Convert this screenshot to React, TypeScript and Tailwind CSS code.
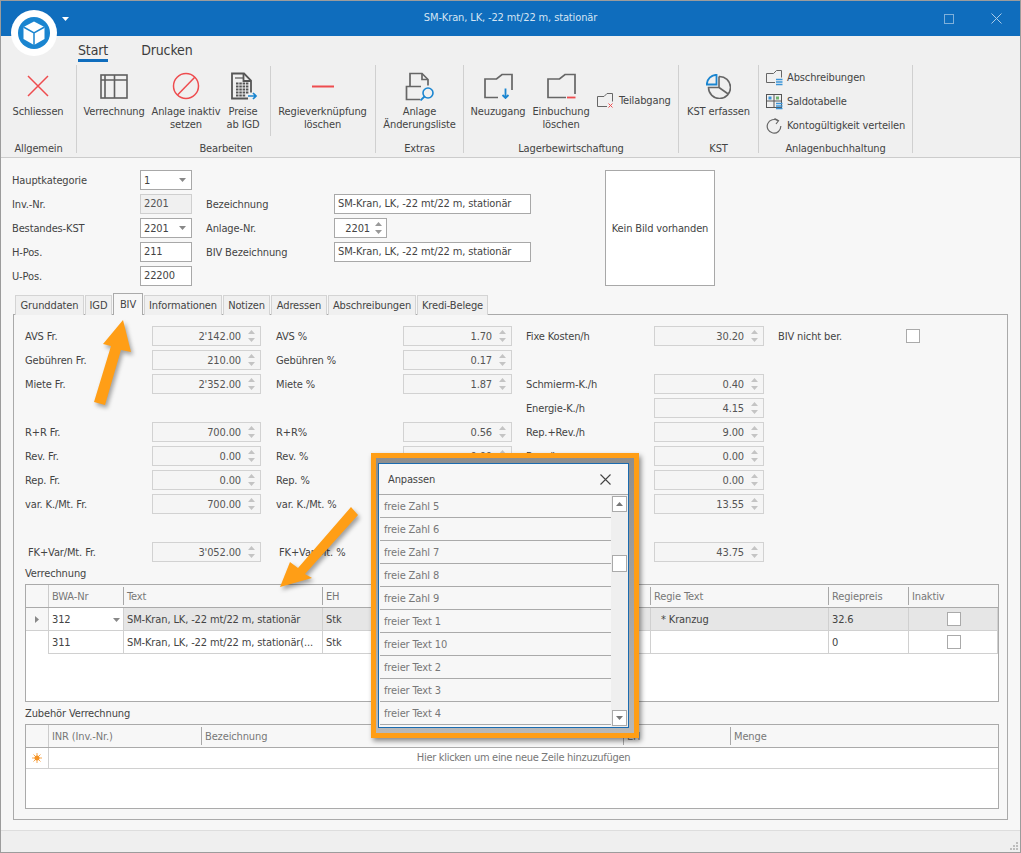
import React from 'react';

const gray = '#666666';

const Logo = () => (
  <svg width="46" height="46" viewBox="0 0 46 46">
    <circle cx="23" cy="23" r="23" fill="#fff" />
    <circle cx="23" cy="23" r="16" fill="#1a85d0" />
    <path d="M23 11.500l10.500 5.500v12L23 35l-10.500-6V17z" fill="#fff" />
    <path d="M12.500 17L23 23l10.500-6M23 23v12" fill="none" stroke="#1a85d0" strokeWidth="1.500" />
  </svg>
);

const CloseIcon = () => (
  <svg width="22" height="22" viewBox="0 0 22 22">
    <path d="M1 1l20 20M21 1L1 21" stroke="#ee4c4f" strokeWidth="1.500" fill="none" />
  </svg>
);

const TableIcon = () => (
  <svg width="28" height="25" viewBox="0 0 28 25" fill="none" stroke="#5f5f5f" strokeWidth="1.600">
    <rect x="1" y="1" width="26" height="23" />
    <path d="M1 6h26M5 1v23M14.500 1v23" />
  </svg>
);

const ForbiddenIcon = () => (
  <svg width="28" height="28" viewBox="0 0 28 28" fill="none" stroke="#ee4c4f" strokeWidth="1.500">
    <circle cx="14" cy="14" r="12.500" />
    <path d="M5.500 23L23 5" />
  </svg>
);

const PreiseIcon = () => (
  <svg width="30" height="28" viewBox="0 0 30 28" fill="none">
    <path d="M20 26.500H4V1.500h12l7 7v12" stroke="#555" strokeWidth="1.800" />
    <path d="M15.500 1.500v7.500H23" stroke="#555" strokeWidth="1.800" />
    <path d="M7 6h8" stroke="#555" strokeWidth="1.200" />
    <path d="M8 11.500h13M8 14.500h13M8 17.500h13M8 20.500h13M8 23.500h10" stroke="#555" strokeWidth="2" strokeDasharray="2.500 .8" />
    <path d="M20 24h8M25 21l3 3-3 3" stroke="#1a85d0" strokeWidth="1.700" />
  </svg>
);

const MinusIcon = () => (
  <svg width="22" height="3" viewBox="0 0 22 3">
    <rect width="22" height="2" y="0.500" fill="#ee4c4f" />
  </svg>
);

const ListeIcon = () => (
  <svg width="30" height="29" viewBox="0 0 30 29" fill="none">
    <path d="M5 14V1.500h12l6 6v6" stroke={gray} strokeWidth="1.700" />
    <path d="M17 1.500v6h6" stroke={gray} strokeWidth="1.700" />
    <path d="M15 27.500H1.500v-13H16" stroke={gray} strokeWidth="1.700" />
    <circle cx="23" cy="21" r="5" stroke="#1a85d0" strokeWidth="1.600" />
    <path d="M19.500 24.500l-4 4" stroke="#1a85d0" strokeWidth="1.800" />
  </svg>
);

const FolderIcon = ({ mark }: { mark: 'down' | 'minus' }) => (
  <svg width="29" height="26" viewBox="0 0 29 26" fill="none">
    {mark === 'down' ? (
      <>
        <path d="M14 24.500H1V6h11.500L18 1.500h10V17" stroke={gray} strokeWidth="1.700" />
        <path d="M21.500 15.500v9.500M18.500 22l3 3 3-3" stroke="#1a85d0" strokeWidth="1.800" />
      </>
    ) : (
      <>
        <path d="M19 24.500H1V6h11.500L18 1.500h10V21" stroke={gray} strokeWidth="1.700" />
        <path d="M20 24.500h8.500" stroke="#ee4c4f" strokeWidth="1.800" />
      </>
    )}
  </svg>
);

const SmallFolderIcon = () => (
  <svg width="17" height="16" viewBox="0 0 17 16" fill="none">
    <path d="M10 13.500H.5V3.500h6.500L10 .5h5.500v8" stroke={gray} />
    <path d="M11.500 10.500l4 4M15.500 10.500l-4 4" stroke="#ee4c4f" />
  </svg>
);

const PieIcon = () => (
  <svg width="25" height="25" viewBox="0 0 25 25" fill="none">
    <path d="M13 2.500A11 11 0 1 1 2.500 13.500H13V2.500M13 13.500l8.500 6" stroke={gray} strokeWidth="1.600" />
    <path d="M.8 10.500A10 10 0 0 1 10.500.8v9.700z" stroke="#1a85d0" strokeWidth="1.800" />
  </svg>
);

const AbschreibIcon = () => (
  <svg width="17" height="16" viewBox="0 0 17 16" fill="none">
    <path d="M9 12.500H.5V3.500h7L10.500.5h5v7" stroke={gray} />
    <path d="M10 9.500h6.500M10 12h6.500M10 14.500h6.500" stroke="#3a94d8" strokeWidth="1.300" />
  </svg>
);

const SaldoIcon = () => (
  <svg width="17" height="16" viewBox="0 0 17 16" fill="none">
    <rect x=".5" y=".5" width="15" height="13" stroke="#555" />
    <path d="M.5 7h15M8 .5v13" stroke="#555" />
    <rect x="2.500" y="2.500" width="3" height="3" fill="#3a94d8" />
    <rect x="10" y="2.500" width="3" height="3" fill="#6fb36f" />
    <path d="M10 9.500h6.500M10 12h6.500M10 14.500h6.500" stroke="#3a94d8" strokeWidth="1.300" />
  </svg>
);

const RefreshIcon = () => (
  <svg width="16" height="16" viewBox="0 0 16 16" fill="none">
    <path d="M12 2.800A6.800 6.800 0 1 0 14.800 8" stroke={gray} strokeWidth="1.200" />
    <path d="M8.500.5L12.500 2.800 10 6" stroke={gray} strokeWidth="1.200" />
  </svg>
);

const BigButton = ({ icon, lines, w }: { icon: React.ReactNode; lines: string[]; w: number }) => (
  <div className="flex flex-col items-center shrink-0" style={{ width: w }}>
    <div className="h-[40px] pt-[2px] flex items-center justify-center">{icon}</div>
    {lines.map((line) => (
      <div key={line} className="leading-[13px] whitespace-nowrap">{line}</div>
    ))}
  </div>
);

const Group = ({ label, w, children }: { label: string; w: number; children: React.ReactNode }) => (
  <div className="flex flex-col h-[88px] border-r border-[#d0d0d0] shrink-0" style={{ width: w }}>
    <div className="flex h-[76px] shrink-0">{children}</div>
    <div className="text-center leading-[14px] pt-[1px] mt-[0px] shrink-0 whitespace-nowrap">{label}</div>
  </div>
);

const Caret = () => (
  <svg width="7" height="4" viewBox="0 0 7 4" className="shrink-0">
    <path d="M0 0h7L3.500 4z" fill="#888" />
  </svg>
);

const Spinner = ({ color = '#c4c4c4' }: { color?: string }) => (
  <div className="flex flex-col gap-[4px] items-center w-[7px] shrink-0">
    <svg width="7" height="4" viewBox="0 0 7 4"><path d="M0 4h7L3.500 0z" fill={color} /></svg>
    <svg width="7" height="4" viewBox="0 0 7 4"><path d="M0 0h7L3.500 4z" fill={color} /></svg>
  </div>
);

const Input = ({ value, className = '' }: { value: string; className?: string }) => (
  <div className={`h-[20px] flex items-center px-[3px] pt-[1px] border border-[#a8a8a8] bg-white whitespace-nowrap ${className}`}>{value}</div>
);

const Combo = ({ value }: { value: string }) => (
  <div className="h-[20px] flex items-center justify-between pl-[3px] pr-[5px] border border-[#a8a8a8] bg-white">
    <span className="pt-[2px]">{value}</span>
    <Caret />
  </div>
);

const Spin = ({ value }: { value: string }) => (
  <div className="h-[20px] flex items-center justify-end gap-[7px] pr-[5px] border border-[#d2d2d2] bg-[#f5f5f5] text-[#555]">
    <span className="pt-[2px]">{value}</span>
    <Spinner />
  </div>
);

const Check = () => <div className="w-[14px] h-[14px] border border-[#aaaaaa] bg-white" />;

const tabs = [
  { name: 'Grunddaten', w: 69 },
  { name: 'IGD', w: 27 },
  { name: 'BIV', w: 30 },
  { name: 'Informationen', w: 78 },
  { name: 'Notizen', w: 47 },
  { name: 'Adressen', w: 56 },
  { name: 'Abschreibungen', w: 88 },
  { name: 'Kredi-Belege', w: 71 },
];

const rows: (string | null)[][] = [
  ['AVS Fr.', "2'142.00", 'AVS %', '1.70', 'Fixe Kosten/h', '30.20'],
  ['Gebühren Fr.', '210.00', 'Gebühren %', '0.17', null, null],
  ['Miete Fr.', "2'352.00", 'Miete %', '1.87', 'Schmierm-K./h', '0.40'],
  [null, null, null, null, 'Energie-K./h', '4.15'],
  ['R+R Fr.', '700.00', 'R+R%', '0.56', 'Rep.+Rev./h', '9.00'],
  ['Rev. Fr.', '0.00', 'Rev. %', '0.00', 'Rev. /h', '0.00'],
  ['Rep. Fr.', '0.00', 'Rep. %', '0.00', 'Rep. /h', '0.00'],
  ['var. K./Mt. Fr.', '700.00', 'var. K./Mt. %', '0.56', 'var. K./h', '13.55'],
  [null, null, null, null, null, null],
  ['\u00a0FK+Var/Mt. Fr.', "3'052.00", '\u00a0FK+Var/Mt. %', '2.43', 'Total/h', '43.75'],
];

const Header = ({ label, w }: { label: string; w: number }) => (
  <div className="shrink-0 h-full flex items-center" style={{ width: w }}>
    <div className="h-[18px] w-px bg-[#a8a8a8] shrink-0" />
    <span className="pl-[3px] pt-[2px] text-[#777] whitespace-nowrap">{label}</span>
  </div>
);

const Cell = ({ w, bg = '', children }: { w: number; bg?: string; children?: React.ReactNode }) => (
  <div className={`shrink-0 h-[23px] flex items-center px-[3px] pt-[2px] border-r border-b border-[#d0d0d0] whitespace-nowrap ${bg}`} style={{ width: w }}>
    {children}
  </div>
);

const popupItems = ['freie Zahl 5', 'freie Zahl 6', 'freie Zahl 7', 'freie Zahl 8', 'freie Zahl 9', 'freier Text 1', 'freier Text 10', 'freier Text 2', 'freier Text 3', 'freier Text 4'];

const App: React.FC = () => {
  return (
    <div className="relative w-[1021px] h-[853px] overflow-hidden flex flex-col border border-[#9c9c9c] bg-[#f7f7f7] font-['DejaVu_Sans',sans-serif] font-stretch-condensed text-[11px] tracking-[-0.13px] text-[#444]">
      {/* Title bar */}
      <div className="h-[35px] shrink-0 bg-[#0f6dbd] grid grid-cols-[1fr_auto_1fr] items-center text-[#d4e4f3]">
        <span />
        SM-Kran, LK, -22 mt/22 m, stationär
        <div className="flex items-center justify-end gap-[37px] pr-[18px]">
          <div className="w-[10px] h-[10px] border border-[#7fb0da]" />
          <svg width="11" height="11" viewBox="0 0 11 11"><path d="M.5.5l10 10M10.500.5l-10 10" stroke="#a9cbe8" /></svg>
        </div>
      </div>
      <div className="absolute left-[10px] top-[9px]"><Logo /></div>
      <div className="absolute left-[61px] top-[16px]">
        <svg width="7" height="4" viewBox="0 0 7 4"><path d="M0 0h7L3.500 4z" fill="#fff" /></svg>
      </div>

      {/* Ribbon */}
      <div className="shrink-0 bg-[#f0f0f0] border-b border-[#cccccc]">
        <div className="h-[29px] flex items-start pl-[77px] text-[14px] gap-[33px] text-[#3c3c3c]">
          <div className="pt-[5px] h-[26px] border-b-[3px] border-[#0f6dbd] leading-[18px]">Start</div>
          <div className="pt-[5px] leading-[18px]">Drucken</div>
        </div>
        <div className="flex h-[92px]">
          <Group label="Allgemein" w={76}>
            <BigButton icon={<CloseIcon />} lines={['Schliessen']} w={74} />
          </Group>
          <Group label="Bearbeiten" w={299}>
            <BigButton icon={<TableIcon />} lines={['Verrechnung']} w={74} />
            <BigButton icon={<ForbiddenIcon />} lines={['Anlage inaktiv', 'setzen']} w={70} />
            <BigButton icon={<PreiseIcon />} lines={['Preise', 'ab IGD']} w={44} />
            <div className="w-px h-[70px] bg-[#d0d0d0] ml-[5px] mt-[1px] shrink-0" />
            <BigButton icon={<MinusIcon />} lines={['Regieverknüpfung', 'löschen']} w={103} />
          </Group>
          <Group label="Extras" w={88}>
            <BigButton icon={<ListeIcon />} lines={['Anlage', 'Änderungsliste']} w={87} />
          </Group>
          <Group label="Lagerbewirtschaftung" w={215}>
            <BigButton icon={<FolderIcon mark="down" />} lines={['Neuzugang']} w={68} />
            <BigButton icon={<FolderIcon mark="minus" />} lines={['Einbuchung', 'löschen']} w={58} />
            <div className="flex items-center gap-[5px] pl-[7px] h-[24px] mt-[24px] whitespace-nowrap">
              <SmallFolderIcon />
              Teilabgang
            </div>
          </Group>
          <Group label="KST" w={80}>
            <BigButton icon={<PieIcon />} lines={['KST erfassen']} w={79} />
          </Group>
          <Group label="Anlagenbuchhaltung" w={154}>
            <div className="flex flex-col pl-[7px] pt-[1px] whitespace-nowrap">
              <div className="h-[24px] flex items-center gap-[4px]"><AbschreibIcon />Abschreibungen</div>
              <div className="h-[24px] flex items-center gap-[4px]"><SaldoIcon />Saldotabelle</div>
              <div className="h-[24px] flex items-center gap-[5px]"><RefreshIcon />Kontogültigkeit verteilen</div>
            </div>
          </Group>
        </div>
      </div>

      {/* Head form */}
      <div className="flex pl-[11px] pt-[12px] shrink-0">
        <div className="grid grid-cols-[128px_52px_14px_128px_197px] auto-rows-[20px] gap-y-[4px] items-center w-[519px] [&>span]:pt-[2px]">
          <span>Hauptkategorie</span>
          <Combo value="1" />
          <span /><span /><span />
          <span>Inv.-Nr.</span>
          <Input value="2201" className="!bg-[#f0f0f0] !border-[#cfcfcf] text-[#555]" />
          <span />
          <span>Bezeichnung</span>
          <Input value="SM-Kran, LK, -22 mt/22 m, stationär" />
          <span>Bestandes-KST</span>
          <Combo value="2201" />
          <span />
          <span>Anlage-Nr.</span>
          <div className="w-[53px] h-[20px] flex items-center justify-end gap-[5px] pr-[4px] border border-[#a8a8a8] bg-white">
            <span className="pt-[2px]">2201</span>
            <Spinner color="#999" />
          </div>
          <span>H-Pos.</span>
          <Input value="211" />
          <span />
          <span>BIV Bezeichnung</span>
          <Input value="SM-Kran, LK, -22 mt/22 m, stationär" />
          <span>U-Pos.</span>
          <Input value="22200" />
        </div>
        <div className="ml-[74px] w-[110px] h-[116px] pt-[2px] border border-[#a8a8a8] bg-white flex items-center justify-center">
          Kein Bild vorhanden
        </div>
      </div>

      {/* Tabs */}
      <div className="relative z-10 flex items-end gap-px h-[21px] mt-[8px] pl-[14px] shrink-0 -mb-px">
        {tabs.map((tab) => (
          <div
            key={tab.name}
            className={
              tab.name === 'BIV'
                ? 'h-[22px] pt-[2px] flex items-center justify-center border border-b-0 border-[#aaaaaa] bg-[#f7f7f7]'
                : 'h-[20px] pt-[2px] flex items-center justify-center border border-b-0 border-[#d4d4d4] bg-[#f0f0f0]'
            }
            style={{ width: tab.w }}
          >
            {tab.name}
          </div>
        ))}
      </div>

      {/* BIV panel */}
      <div className="mx-[12px] h-[506px] shrink-0 border border-[#aaaaaa] bg-[#f7f7f7] pl-[11px] pt-[11px]">
        <div className="grid grid-cols-[127px_109px_15px_127px_109px_14px_128px_110px_14px_128px_14px] auto-rows-[20px] gap-y-[4px] items-center [&>span]:pt-[2px]">
          {rows.map((row, i) => (
            <React.Fragment key={i}>
              <span className="whitespace-nowrap">{row[0]}</span>
              {row[1] ? <Spin value={row[1]} /> : <span />}
              <span />
              <span className="whitespace-nowrap">{row[2]}</span>
              {row[3] ? <Spin value={row[3]} /> : <span />}
              <span />
              <span className="whitespace-nowrap">{row[4]}</span>
              {row[5] ? <Spin value={row[5]} /> : <span />}
              <span />
              <span className="whitespace-nowrap">{i === 0 ? 'BIV nicht ber.' : ''}</span>
              {i === 0 ? <Check /> : <span />}
            </React.Fragment>
          ))}
        </div>

        <div className="h-[21px] mt-[1px] leading-[21px]">Verrechnung</div>
        <div className="w-[974px] h-[118px] border border-[#aaaaaa] bg-white">
          <div className="flex h-[23px] bg-[#f7f7f7] border-b border-[#aaaaaa]">
            <div className="w-[23px] shrink-0 border-r border-[#cccccc]" />
            <div className="w-[74px] shrink-0 h-full flex items-center pl-[3px] pt-[2px] text-[#777]">BWA-Nr</div>
            <Header label="Text" w={199} />
            <Header label="EH" w={328} />
            <Header label="Regie Text" w={178} />
            <Header label="Regiepreis" w={80} />
            <Header label="Inaktiv" w={90} />
          </div>
          <div className="flex">
            <div className="w-[23px] shrink-0 h-[23px] flex items-center justify-center bg-[#f7f7f7] border-r border-b border-[#d0d0d0]">
              <svg width="4" height="7" viewBox="0 0 4 7"><path d="M0 0v7l4-3.500z" fill="#888" /></svg>
            </div>
            <Cell w={75}>
              <span className="flex-1">312</span>
              <Caret />
            </Cell>
            <Cell w={199} bg="bg-[#e6e6e6]">SM-Kran, LK, -22 mt/22 m, stationär</Cell>
            <Cell w={328} bg="bg-[#e6e6e6]">Stk</Cell>
            <Cell w={178} bg="bg-[#e6e6e6]"><span className="pl-[7px]">* Kranzug</span></Cell>
            <Cell w={80} bg="bg-[#e6e6e6]">32.6</Cell>
            <Cell w={89} bg="bg-[#e6e6e6]"><span className="ml-[35px] -mt-[2px]"><Check /></span></Cell>
          </div>
          <div className="flex">
            <div className="w-[23px] shrink-0 border-r border-[#d0d0d0]" />
            <Cell w={75}>311</Cell>
            <Cell w={199}>SM-Kran, LK, -22 mt/22 m, stationär(...</Cell>
            <Cell w={328}>Stk</Cell>
            <Cell w={178} />
            <Cell w={80}>0</Cell>
            <Cell w={89}><span className="ml-[35px] -mt-[2px]"><Check /></span></Cell>
          </div>
        </div>

        <div className="h-[22px] pt-[1px] leading-[22px]">Zubehör Verrechnung</div>
        <div className="w-[974px] h-[85px] border border-[#aaaaaa] bg-white">
          <div className="flex h-[23px] bg-[#f7f7f7] border-b border-[#aaaaaa]">
            <div className="w-[23px] shrink-0 border-r border-[#cccccc]" />
            <div className="w-[152px] shrink-0 h-full flex items-center pl-[3px] pt-[2px] text-[#777]">INR (Inv.-Nr.)</div>
            <Header label="Bezeichnung" w={422} />
            <Header label="EH" w={107} />
            <Header label="Menge" w={268} />
          </div>
          <div className="flex h-[21px] border-b border-[#d0d0d0]">
            <div className="w-[23px] shrink-0 flex items-center justify-center border-r border-[#d0d0d0]">
              <svg width="10" height="10" viewBox="0 0 10 10">
                <circle cx="5" cy="5" r="2.500" fill="#f59324" />
                <path d="M5 0v10M0 5h10M1.500 1.500l7 7M8.500 1.500l-7 7" stroke="#f59324" strokeWidth=".8" />
              </svg>
            </div>
            <div className="flex-1 flex items-center justify-center pt-[1px] tracking-[-0.3px] text-[#777]">Hier klicken um eine neue Zeile hinzuzufügen</div>
          </div>
        </div>
      </div>

      {/* Status bar */}
      <div className="mt-[10px] flex-1 bg-[#efefef] border-t border-[#dddddd] flex items-end justify-end">
        <svg width="12" height="12" viewBox="0 0 12 12" fill="#bdbdbd">
          <rect x="8" y="2" width="2" height="2" />
          <rect x="5" y="5" width="2" height="2" /><rect x="8" y="5" width="2" height="2" />
          <rect x="2" y="8" width="2" height="2" /><rect x="5" y="8" width="2" height="2" /><rect x="8" y="8" width="2" height="2" />
        </svg>
      </div>

      {/* Customization popup with orange callout */}
      <div className="absolute z-20 left-[370px] top-[452px] w-[268px] h-[285px] border-[5px] border-[#ff9e16] bg-linear-to-b from-[#8e8e8e] to-[#b8b8b8] pt-[5px] pl-[2px] pr-[5px] pb-[5px] shadow-[2px_3px_5px_rgba(0,0,0,0.45)]">
        <div className="w-full h-full border border-[#1a6bb0] bg-[#f7f7f7] flex flex-col overflow-hidden">
          <div className="h-[31px] shrink-0 flex items-center justify-between pl-[9px] pr-[17px] border-b border-[#aaaaaa]">
            <span className="pt-[2px]">Anpassen</span>
            <svg width="11" height="11" viewBox="0 0 11 11"><path d="M.5.5l10 10M10.500.5l-10 10" stroke="#444" strokeWidth="1.100" /></svg>
          </div>
          <div className="flex-1 flex min-h-0">
            <div className="w-[232px] pl-px shrink-0">
              {popupItems.map((item) => (
                <div key={item} className="h-[23px] flex items-center pl-[4px] pt-[2px] border-b border-[#aaaaaa] text-[#777]">{item}</div>
              ))}
            </div>
            <div className="w-[17px] shrink-0 bg-[#efefef] flex flex-col pt-px pb-px pl-px">
              <div className="w-[15px] h-[16px] bg-white border border-[#aaaaaa] flex items-center justify-center">
                <svg width="7" height="4" viewBox="0 0 7 4"><path d="M0 4h7L3.500 0z" fill="#777" /></svg>
              </div>
              <div className="w-[15px] h-[17px] mt-[43px] bg-white border border-[#aaaaaa]" />
              <div className="w-[15px] h-[16px] mt-auto bg-white border border-[#aaaaaa] flex items-center justify-center">
                <svg width="7" height="4" viewBox="0 0 7 4"><path d="M0 0h7L3.500 4z" fill="#777" /></svg>
              </div>
            </div>
          </div>
        </div>
      </div>

      {/* Callout arrows */}
      <svg className="absolute left-0 top-0 z-30 pointer-events-none drop-shadow-[2px_3px_2px_rgba(0,0,0,0.35)]" width="1021" height="853" viewBox="0 0 1021 853">
        <path d="M122 319L130 351 120 349 104 404 93 401 110 345 102 343z" fill="#ff9e16" />
        <path d="M279 586L289 561 297 567 350 506 357 514 304 573 311 577z" fill="#ff9e16" />
      </svg>
    </div>
  );
};

export default App;
